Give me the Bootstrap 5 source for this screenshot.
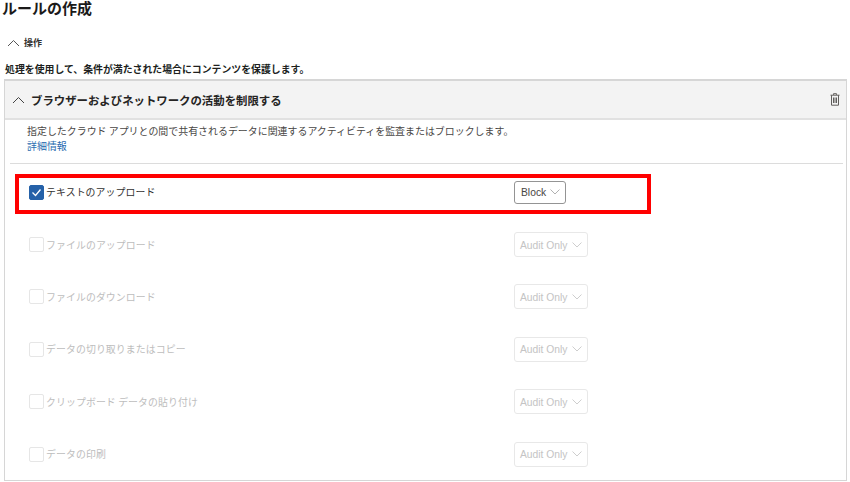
<!DOCTYPE html>
<html lang="ja">
<head>
<meta charset="utf-8">
<link href="https://cdn.jsdelivr.net/npm/bootstrap@5.3.0/dist/css/bootstrap.min.css" rel="stylesheet">
<style>
html,body{height:482px;overflow:hidden;background:#fff}
body{font-family:"Noto Sans CJK JP","Liberation Sans",sans-serif;color:#201f1e;font-size:9.5px;line-height:14px}
.page-title{font-size:15px;font-weight:700;line-height:15px;margin:0 0 0 2px;color:#1b1a19}
.section-toggle{margin:20px 0 0 7px;height:16px;font-size:9px;font-weight:700;color:#323130;gap:4px}
.intro{font-size:9.9px;font-weight:700;line-height:14px;margin:11px 0 0 5px;height:17px;color:#201f1e}
.rule-box{margin:0 3px 0 4px;height:402px;border:1px solid #d6d6d6;border-width:2px 1px 1px 1px}
.rule-head{height:39px;background:#f3f3f3;border-bottom:2px solid #e1e1e1;padding:0 6px 0 7px}
.rule-head .ttl{font-size:11.4px;font-weight:700;color:#252423;margin-left:6px}
.rule-desc{padding:3px 0 0 22px;height:43px;font-size:9.95px;line-height:15px;color:#484644;margin-right:5px}
.rule-desc a{color:#2b6cb0;text-decoration:none;display:block}
.sep{margin:0 0 0 5px;border-top:1px solid #dcdcdc;opacity:1;width:calc(100% - 8px)}
.opt{height:52.4px;padding-left:24px}
.opt-first{margin-top:2px}
.lbl-cell{width:485px;gap:2px}
.box{width:15px;height:15px;border:1px solid #e6e6e6;border-radius:2px;background:#fff;flex:none}
.box-on{background:#2561a8;border-color:#2561a8}
.lbl{font-size:9.9px;color:#bdbdbd;letter-spacing:.1px}
.opt-on .lbl{color:#323130}
.pick{height:25px;width:74px;border:1px solid #e8e8e8;border-radius:3px;color:#c4c4c4;font-size:10.3px;font-family:"Liberation Sans",sans-serif;padding:0 5px 0 5px}
.pick span{padding-top:2px}
.pick-on{height:23px;width:52px;border-color:#949494;color:#484644;padding-left:6px}
.hilite{left:10px;top:8px;width:636px;height:40px;border:4px solid #f00;pointer-events:none}
</style>
</head>
<body>
<h1 class="page-title">ルールの作成</h1>
<div class="section-toggle d-flex align-items-center">
<svg width="13" height="8" viewBox="0 0 13 8"><path d="M1 7l5.500-5.500L12 7" fill="none" stroke="#555" stroke-width="1"/></svg>
<span>操作</span>
</div>
<p class="intro">処理を使用して、条件が満たされた場合にコンテンツを保護します。</p>
<div class="rule-box">
  <div class="rule-head d-flex align-items-center">
    <svg width="13" height="8" viewBox="0 0 13 8"><path d="M1 7l5.500-5.500L12 7" fill="none" stroke="#444" stroke-width="1"/></svg>
    <span class="ttl flex-grow-1">ブラウザーおよびネットワークの活動を制限する</span>
    <svg width="10" height="13" viewBox="0 0 10 13"><path d="M3.500 1.800V.7h3v1.100M.5 2.200h9M1.500 2.200v10h7v-10M3.500 4.500v5.500M5 4.500v5.500M6.500 4.500v5.500" fill="none" stroke="#605e5c" stroke-width="1"/></svg>
  </div>
  <div class="rule-desc">指定したクラウド アプリとの間で共有されるデータに関連するアクティビティを監査またはブロックします。<a href="#">詳細情報</a></div>
  <hr class="sep">
  <div class="opt opt-first opt-on d-flex align-items-center position-relative">
    <div class="hilite position-absolute"></div>
    <div class="lbl-cell d-flex align-items-center">
      <span class="box box-on d-flex align-items-center justify-content-center"><svg width="11" height="9" viewBox="0 0 11 9"><path d="M1.500 4.500l3 3 5-6" fill="none" stroke="#fff" stroke-width="1.300"/></svg></span>
      <span class="lbl">テキストのアップロード</span>
    </div>
    <div class="pick pick-on d-flex align-items-center justify-content-between"><span>Block</span><svg width="10" height="6" viewBox="0 0 10 6"><path d="M.5.500L5 5 9.500.500" fill="none" stroke="#a8a8a8" stroke-width=".9"/></svg></div>
  </div>
  <div class="opt d-flex align-items-center"><div class="lbl-cell d-flex align-items-center"><span class="box"></span><span class="lbl">ファイルのアップロード</span></div><div class="pick d-flex align-items-center justify-content-between"><span>Audit Only</span><svg width="10" height="6" viewBox="0 0 10 6"><path d="M.5.500L5 5 9.500.500" fill="none" stroke="#c8c8c8" stroke-width=".9"/></svg></div></div>
  <div class="opt d-flex align-items-center"><div class="lbl-cell d-flex align-items-center"><span class="box"></span><span class="lbl">ファイルのダウンロード</span></div><div class="pick d-flex align-items-center justify-content-between"><span>Audit Only</span><svg width="10" height="6" viewBox="0 0 10 6"><path d="M.5.500L5 5 9.500.500" fill="none" stroke="#c8c8c8" stroke-width=".9"/></svg></div></div>
  <div class="opt d-flex align-items-center"><div class="lbl-cell d-flex align-items-center"><span class="box"></span><span class="lbl">データの切り取りまたはコピー</span></div><div class="pick d-flex align-items-center justify-content-between"><span>Audit Only</span><svg width="10" height="6" viewBox="0 0 10 6"><path d="M.5.500L5 5 9.500.500" fill="none" stroke="#c8c8c8" stroke-width=".9"/></svg></div></div>
  <div class="opt d-flex align-items-center"><div class="lbl-cell d-flex align-items-center"><span class="box"></span><span class="lbl">クリップボード データの貼り付け</span></div><div class="pick d-flex align-items-center justify-content-between"><span>Audit Only</span><svg width="10" height="6" viewBox="0 0 10 6"><path d="M.5.500L5 5 9.500.500" fill="none" stroke="#c8c8c8" stroke-width=".9"/></svg></div></div>
  <div class="opt d-flex align-items-center"><div class="lbl-cell d-flex align-items-center"><span class="box"></span><span class="lbl">データの印刷</span></div><div class="pick d-flex align-items-center justify-content-between"><span>Audit Only</span><svg width="10" height="6" viewBox="0 0 10 6"><path d="M.5.500L5 5 9.500.500" fill="none" stroke="#c8c8c8" stroke-width=".9"/></svg></div></div>
</div>
<script src="https://cdn.jsdelivr.net/npm/bootstrap@5.3.0/dist/js/bootstrap.bundle.min.js"></script>
</body>
</html>
